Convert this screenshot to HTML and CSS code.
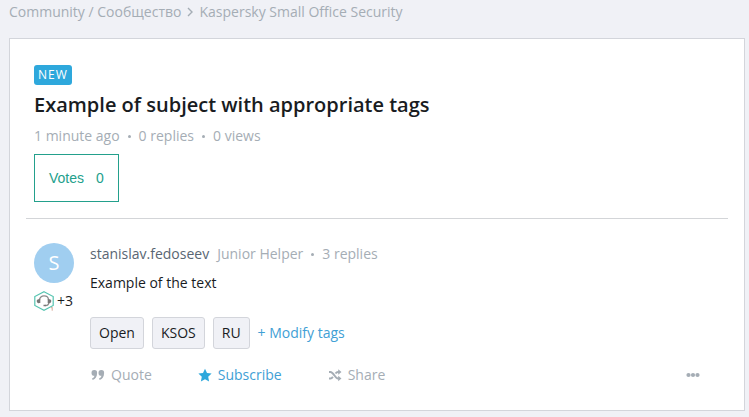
FILE: index.html
```html
<!DOCTYPE html>
<html lang="en">

<head>
    <meta charset="utf-8">
    <meta name="viewport" content="width=device-width, initial-scale=1">
    <title>Example of subject with appropriate tags</title>
    <link rel="stylesheet" href="styles.css">
</head>

<body>
    <nav class="breadcrumbs" aria-label="Breadcrumb">
        <a href="#">Community / Сообщество</a>
        <svg class="chevron" viewBox="0 0 6 10" aria-hidden="true"><path d="M1 1l4 4-4 4" /></svg>
        <a href="#">Kaspersky Small Office Security</a>
    </nav>

    <main class="card">
        <header class="topic">
            <span class="label-new">NEW</span>
            <h1>Example of subject with appropriate tags</h1>
            <div class="meta">
                <span>1 minute ago</span>
                <span class="dot"></span>
                <span>0 replies</span>
                <span class="dot"></span>
                <span>0 views</span>
            </div>
            <button type="button" class="votes"><span>Votes</span><span>0</span></button>
        </header>

        <article class="post">
            <div class="author">
                <a href="#" class="avatar">S</a>
                <div class="awards">
                    <svg class="award" viewBox="0 0 20 20" aria-hidden="true">
                        <path class="hexagon" d="M10 .7L19.200 5.500V14.500L10 19.300L.8 14.500V5.500z" />
                        <path class="headset" d="M5.500 9C5.500 3.500 14.500 3.500 14.500 9M14.800 11.500c0 2-1.300 3-3.300 3" />
                        <path class="headset-pads" d="M4 8.300h2.300v3.700H5.300a1.800 1.800 0 0 1-1.300-3.700zM16 8.300h-2.300v3.700h1a1.800 1.800 0 0 0 1.300-3.700zM9.500 13.800h2.500v1.500H9.500z" />
                        <path class="award-level" d="M17 17l1.200-.8v3.500" />
                    </svg>
                    <span>+3</span>
                </div>
            </div>

            <div class="content">
                <div class="meta">
                    <a href="#" class="username">stanislav.fedoseev</a>
                    <span class="rank">Junior Helper</span>
                    <span class="dot"></span>
                    <span>3 replies</span>
                </div>
                <p>Example of the text</p>
                <div class="tags">
                    <a href="#" class="tag">Open</a>
                    <a href="#" class="tag">KSOS</a>
                    <a href="#" class="tag">RU</a>
                    <button type="button" class="modify">+ Modify tags</button>
                </div>
                <div class="actions">
                    <button type="button">
                        <svg viewBox="0 0 14 14" aria-hidden="true"><path d="M3.200 2a2.800 2.800 0 0 1 2.900 3C6.100 8.500 4.500 11 1.700 12L1 10.600c1.400-.6 2.200-1.500 2.400-2.800A2.900 2.900 0 0 1 .5 4.900 2.800 2.800 0 0 1 3.200 2zM10.200 2a2.800 2.800 0 0 1 2.900 3c0 3.500-1.600 6-4.400 7L8 10.600c1.400-.6 2.200-1.500 2.400-2.800a2.900 2.900 0 0 1-2.900-2.900A2.800 2.800 0 0 1 10.200 2z" /></svg>
                        <span>Quote</span>
                    </button>
                    <button type="button" class="subscribe">
                        <svg viewBox="0 0 14 14" aria-hidden="true"><path d="M7 .8l2 4.200 4.600.6-3.400 3.200.9 4.600L7 11.200l-4.100 2.200.9-4.600L.4 5.600 5 5z" /></svg>
                        <span>Subscribe</span>
                    </button>
                    <button type="button">
                        <svg viewBox="0 0 14 14" aria-hidden="true"><path class="shuffle-line" d="M1 4h1.500C5.500 4 7 10.500 10 10.500h1M1 10.500h1.500c1 0 1.700-.7 2.400-1.600M7.500 5.500C8.200 4.600 9 4 10 4h1" /><path d="M10.200 1.300L13.500 4l-3.300 2.700zM10.200 7.800l3.300 2.700-3.300 2.700z" /></svg>
                        <span>Share</span>
                    </button>
                    <button type="button" class="more" aria-label="More">
                        <svg viewBox="0 0 14 14" aria-hidden="true"><circle cx="2.500" cy="7" r="2.100" /><circle cx="7" cy="7" r="2.100" /><circle cx="11.500" cy="7" r="2.100" /></svg>
                    </button>
                </div>
            </div>
        </article>
    </main>
</body>

</html>
```
FILE: styles.css
```css
* {
    box-sizing: border-box;
}

body {
    margin: 0;
    padding: 2px 4px 6px 9px;
    background-color: #f0f1f6;
    color: #191c1f;
    font-family: "Open Sans", sans-serif;
    font-size: 14px;
    line-height: 20px;
}

a {
    color: inherit;
    text-decoration: none;
}

button {
    padding: 0;
    border: none;
    background: none;
    color: inherit;
    font: inherit;
    cursor: pointer;
}

.breadcrumbs {
    display: flex;
    align-items: center;
    gap: 6px;
    margin-bottom: 16px;
    color: #a5adb5;
}

.chevron {
    width: 6px;
    height: 10px;
    fill: none;
    stroke: #a5adb5;
    stroke-width: 1.4;
}

.card {
    border: 1px solid #d3d5db;
    background-color: #ffffff;
}

.topic {
    display: flex;
    flex-direction: column;
    align-items: flex-start;
    margin: 0 16px;
    padding: 26px 8px 16px;
    border-bottom: 1px solid #d3d5d8;
}

.label-new {
    padding: 0 4px;
    border-radius: 3px;
    background-color: #2ea8dc;
    color: #ffffff;
    font-size: 12px;
    letter-spacing: 1px;
}

h1 {
    margin: 6px 0 7px;
    font-size: 20px;
    font-weight: 600;
    line-height: 28px;
}

.meta {
    display: flex;
    align-items: center;
    gap: 8px;
    color: #a5adb5;
}

.dot {
    width: 3px;
    height: 3px;
    border-radius: 50%;
    background-color: #a5adb5;
}

.votes {
    display: flex;
    align-items: center;
    gap: 12px;
    height: 48px;
    margin-top: 8px;
    padding: 0 14px;
    border: 1px solid #23a08c;
    color: #23a08c;
    font-family: "Liberation Sans", Arial, sans-serif;
}

.post {
    display: flex;
    gap: 16px;
    padding: 24px 24px 25px;
}

.author {
    width: 40px;
}

.avatar {
    display: block;
    height: 40px;
    border-radius: 50%;
    background-color: #a0cef0;
    color: #ffffff;
    font-size: 20px;
    line-height: 40px;
    text-align: center;
}

.awards {
    display: flex;
    align-items: center;
    gap: 3px;
    margin-top: 8px;
}

.award {
    flex: none;
    width: 20px;
    height: 20px;
    fill: none;
}

.hexagon {
    stroke: #55c4b0;
    stroke-width: 1.2;
}

.headset {
    stroke: #8a8a8a;
    stroke-width: 1.3;
}

.headset-pads {
    fill: #777777;
}

.award-level {
    stroke: #d8a898;
}

.content {
    flex: 1;
    padding-top: 1px;
}

.username {
    color: #596673;
}

.content p {
    margin: 9px 0 24px;
}

.tags {
    display: flex;
    gap: 8px;
}

.tag {
    padding: 5px 8px;
    border: 1px solid #d3d5db;
    border-radius: 3px;
    background-color: #f0f1f6;
}

.modify,
.subscribe {
    color: #41a0d5;
}

.actions {
    display: flex;
    gap: 46px;
    margin-top: 16px;
    padding: 0 20px 0 1px;
    color: #a5adb5;
}

.actions button {
    display: flex;
    align-items: center;
    gap: 6px;
}

.actions svg {
    width: 14px;
    height: 14px;
    fill: currentColor;
}

.actions .subscribe svg {
    fill: #2ea8dc;
}

.actions .shuffle-line {
    fill: none;
    stroke: currentColor;
    stroke-width: 2;
}

.actions .more {
    margin-left: auto;
}
```
